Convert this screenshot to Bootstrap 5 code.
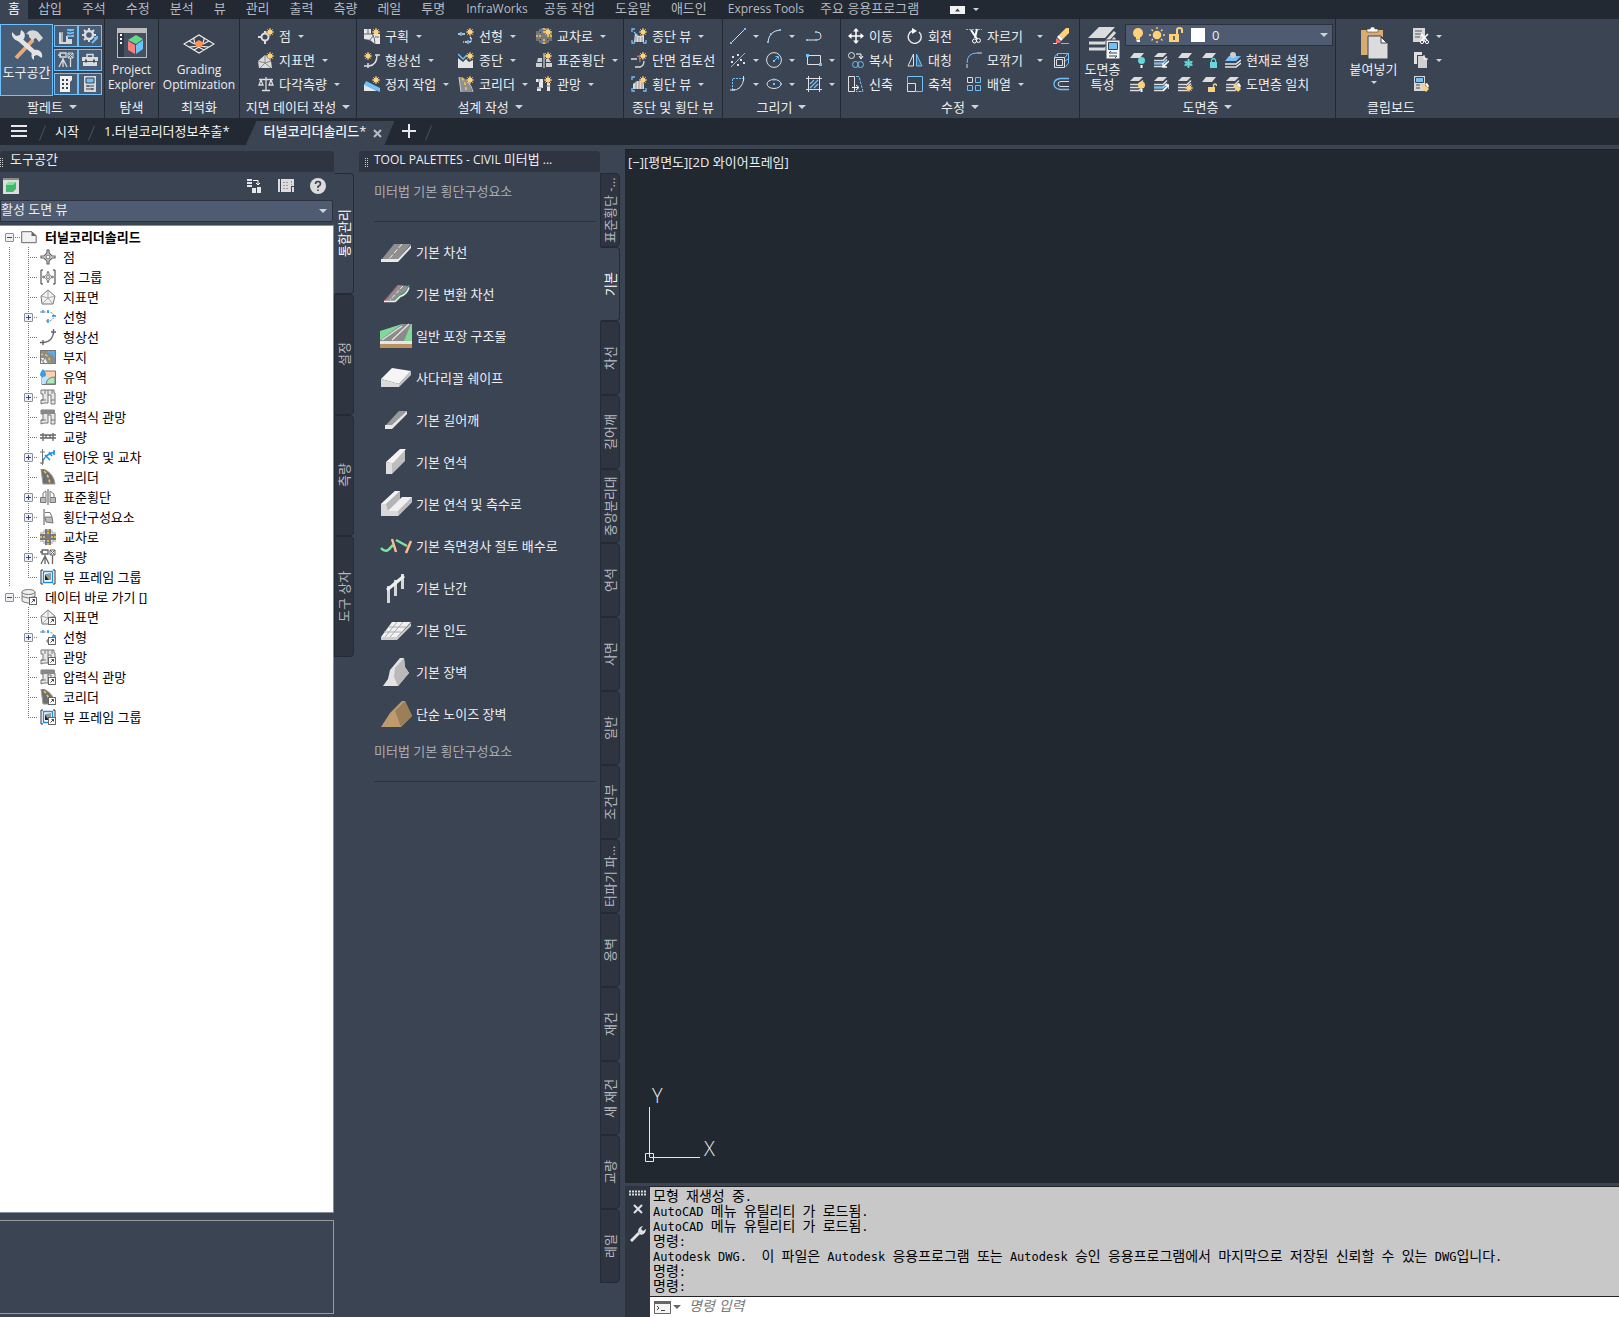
<!DOCTYPE html>
<html lang="ko">
<head>
<meta charset="utf-8">
<meta name="viewport" content="width=device-width, initial-scale=1">
<title>터널코리더솔리드</title>
<link href="https://cdn.jsdelivr.net/npm/bootstrap@5.3.0/dist/css/bootstrap.min.css" rel="stylesheet">
<style>
:root{--deep:#222933;--panel:#3b4453;--shade:#2e3440;--field:#4f5b70;--txt:#eceef0;--dim:#b7bbc1;--hl:#6fc0fb}
body{font-family:"Open Sans","Noto Sans CJK KR",sans-serif;font-size:13px;line-height:15px;color:var(--txt);background:var(--panel)}
button{color:inherit;background:none;border:0;padding:0}
svg{display:block;flex:none}
.en{font-size:12px}
.ko{font-size:13px}
.i16{width:16px;height:16px}
.app{min-height:100vh}
/* menu */
.menubar{background:var(--deep);height:19px;color:var(--dim)}
.menubar a{color:inherit;text-decoration:none;padding:0 10px;line-height:17px;height:19px;white-space:nowrap}
.menubar a.on{background:var(--panel);color:#fff;padding:0 8px}
.menubar a.en{padding:0 6px 0 11px}
.minimise{background:#f2f2f2;width:15px;height:8px;margin:6px 6px 0 21px}
/* ribbon */
.ribbon{height:99px}
.rpanel{border-right:1px solid var(--deep);padding-top:5px;flex:none}
.rpanel.last{border-right:0;width:110px}
.p-palettes{width:105px}.p-explore{width:54px}.p-grading{width:81px}.p-ground{width:117px}.p-design{width:267px}.p-views{width:99px}.p-draw{width:118px}.p-modify{width:239px}.p-layers{width:256px}
.rbody{height:72px}
.inset{padding-left:7px}
.inset-lg{padding-left:18px}
.c36{width:36px}.c40{width:40px}.c59{width:59px}.c78{width:78px}.c87{width:87px}.c94{width:94px}
.rtitle{height:22px;line-height:21px;white-space:nowrap;display:flex;justify-content:center;align-items:center;gap:6px}
.rb{display:flex;align-items:center;height:24px;gap:5px;white-space:nowrap;line-height:15px}
.dd{width:0;height:0;border:3px solid transparent;border-top-color:#d0d3d8;border-bottom:0;margin-left:2px;flex:none}
.dd.big{border-width:4px;border-bottom:0;margin:0}
.wide{width:43px;text-align:left}
.bigb{display:flex;flex-direction:column;align-items:center;white-space:nowrap;line-height:15px}
.bigb svg{margin:3px 0 3px 3px}
.bigb.tools{width:53px}
.bigb.tools svg{margin:4px 0}
.bigb.explore svg{margin:4px 0}
.bigb.grade svg{margin:10px 0 8px}
.bigb.layerprops{width:45px}
.bigb.pasting{width:49px;margin:0 15px 0 13px}
.toggle-on{background:#475c75;border:1px solid var(--hl)}
.pgrid{display:grid;grid-template-columns:24px 24px;grid-auto-rows:22px;row-gap:2px;padding:1px 2px 0 1px}
.pgrid button{display:flex;align-items:center;justify-content:center}
.layerbox{background:var(--field);border:1px solid #2b323e;height:22px;width:208px;display:flex;align-items:center;padding-left:4px;gap:3px;margin-bottom:2px}
.layerbox select{appearance:none;background:none;border:0;color:var(--txt);flex:1;padding:0;outline:0}
/* file tabs */
.filetabs{background:var(--deep);height:27px;padding-top:3px}
.filetabs a{color:#f3f4f5;text-decoration:none;white-space:nowrap;line-height:20px;height:24px;padding:0 12px}
.filetabs a.longer{padding-right:16px}
.filetabs a.on{display:flex;gap:7px;background:var(--panel);clip-path:polygon(11px 0,100% 0,calc(100% - 10px) 100%,0 100%);padding:0 12px 0 18px;font-weight:500}
.filetabs a.on svg{margin-top:8px}
.burger{width:42px;padding:0 0 4px 10px}
.addtab{padding:0 8px 4px}
.slash{width:1px;height:16px;background:#4b5361;transform:rotate(22deg);margin-top:4px}
/* docks */
.workspace{flex:1;padding-top:4px}
.dockhead{background:var(--shade);height:21px;line-height:17px;border-radius:4px 4px 0 0;white-space:nowrap}
.grip{width:4px;height:10px;margin:7px 6px 0 0;background:conic-gradient(transparent 75%,#c9ccd1 0) 0 0/2px 2px}
.toolspace{width:334px;margin-top:2px}
.tsbar{height:28px;padding:0 8px 0 3px}
.views{background:var(--field);border:1px solid #2b323e;border-radius:0 2px 2px 0;color:var(--txt);appearance:none;height:22px;padding:0 0 3px;width:333px;outline:0}
.views+.dd{margin-left:-14px}
.vtabs{width:20px;padding-top:24px}
.vtabs button{writing-mode:vertical-rl;text-orientation:sideways;transform:rotate(180deg);height:121px;width:20px;background:var(--shade);border:1px solid #252b36;border-radius:4px 0 0 4px;color:var(--dim);text-align:center;white-space:nowrap;overflow:hidden;line-height:16px;font-size:13px}
.vtabs.small button{height:74px}
.vtabs button.on{background:var(--panel);color:#fff;border-right-color:var(--panel)}
.treebox{background:#fff;color:#000;border:1px solid #868d98;border-left:0;flex:1;padding-top:1px;margin:3px 0 7px}
.treebox ul{list-style:none;margin:0;padding:0}
.trow{display:flex;align-items:center;height:20px;line-height:18px;white-space:nowrap}
.trow button{width:9px;height:9px;border:1px solid #8b8f95;border-radius:1px;flex:none;background:linear-gradient(#34468c,#34468c) 50% 50%/5px 1px no-repeat,#eef0f4}
.trow button.plus{background:linear-gradient(#34468c,#34468c) 50% 50%/5px 1px no-repeat,linear-gradient(#34468c,#34468c) 50% 50%/1px 5px no-repeat,#eef0f4}
.troot{padding-left:5px;background:repeating-linear-gradient(90deg,#777 0 1px,transparent 1px 2px) 15px 10px/5px 1px no-repeat}
.troot svg{margin:0 8px 0 7px}
.kids .trow{padding-left:24px;background:repeating-linear-gradient(#777 0 1px,transparent 1px 2px) 28px 0/1px 100% no-repeat,repeating-linear-gradient(90deg,#777 0 1px,transparent 1px 2px) 28px 10px/10px 1px no-repeat}
.kids li:last-child .trow{background-size:1px 11px,10px 1px}
.kids svg{margin:0 7px 0 16px}
.kids button+svg{margin-left:7px}
.kids.linked{background:repeating-linear-gradient(#777 0 1px,transparent 1px 2px) 9px 0/1px 100% no-repeat}
.infobox{border:1px solid #9a9a9a;border-left:0;height:94px;margin-bottom:3px}
.palette{width:241px;margin:2px 0 0 5px}
.palette .grip{margin-left:6px;margin-right:5px}
.groupname{color:#a9adb4;margin:0 4px 9px 15px;padding:12px 0 22px;border-bottom:1px solid #2b323e}
.groupname.end{padding-top:9px}
.pitem{display:flex;align-items:center;gap:4px;height:42px;padding-left:21px;width:100%;white-space:nowrap}
.pitem svg{width:32px;height:30px}
.stage{margin-left:5px}
.drawing{background:#212830;border-top:1px solid #1c222a;flex:1;padding:5px 3px 20px}
.drawing text{font-family:"Open Sans",sans-serif;font-weight:300;font-size:20px;fill:#e6e6e6}
.cmdbar{background:var(--shade);margin-top:3px;height:131px}
.cmdtools{width:25px}
.cmdlog{background:#c8c8c8;color:#000;border-top:1px solid #222;height:110px;padding:2px 3px 0;font-family:"Liberation Mono","Noto Sans CJK KR",monospace;font-family:"DejaVu Sans Mono","Noto Sans CJK KR",monospace;font-size:12px;line-height:15px;white-space:pre;overflow:hidden}
.cmdlog div{height:15px}
.cmdlog b{font-weight:400;font-size:14px;line-height:14px}
.cmdin{background:#fff;border-top:1px solid #222;flex:1;color:#777}
.cmdin .dd{border-top-color:#666;margin-left:2px}
.cmdin input{border:0;outline:0;flex:1;font:italic 14px/16px "Noto Sans CJK KR",sans-serif;height:19px;padding:0 0 4px;color:#777}
.cmdin input::placeholder{color:#777;opacity:1}
</style>
<script src="https://cdn.jsdelivr.net/npm/bootstrap@5.3.0/dist/js/bootstrap.bundle.min.js"></script>
</head>
<body>
<svg width="0" height="0" class="position-absolute" aria-hidden="true"><defs>
<g id="sun"><circle cx="12" cy="4" r="2.5" fill="#ffd27a"/><path d="M12 0v8M8 4h8M9.3 1.3l5.4 5.4M14.7 1.3L9.3 6.7" stroke="#ffd27a"/></g>
<g id="lnk"><rect x="8.500" y="8.500" width="7" height="7" fill="#fff" stroke="#666"/><path d="M10.500 13.500l3-3M11.500 10.500h2v2" stroke="#444" fill="none"/></g>
<g id="sheet"><path d="M5 1h10l-4 5H1z" fill="#dcdcdc"/></g>
<g id="stack"><path d="M5 1h9l-4 4H1z" fill="#dcdcdc"/><path d="M1 8.500h9l4-4M1 11.500h9l4-4M1 14.500h9l4-4" stroke="#dcdcdc" stroke-width="1.500" fill="none"/></g>
<symbol id="tools" viewBox="0 0 32 32"><path d="M22 11L5 29" stroke="#f0a873" stroke-width="4"/><path d="M15 5l3-3q5-2 9 1l5 6-4 4-3-4q-2 0-3 3l-4-4q1-3-3-3z" fill="#d8d8d8"/><path d="M7 9l18 16" stroke="#e3e3e3" stroke-width="4.500"/><path d="M1 3l4 4 4-1 1-5c5 2 5 8 1 11-6 1-11-3-10-9zM31 29l-5-3-3 1v4c-4-2-3-9 1-10 5-1 8 3 7 8z" fill="#e3e3e3"/></symbol>
<symbol id="p1" viewBox="0 0 16 16"><path d="M1 4h4v10h3V8h2v3h4v5H1z" fill="#d8d8d8"/><path d="M1 4h3v10" fill="none" stroke="#38506c" stroke-width=".6"/><path d="M9 1h7v8H9z" fill="#6fc0fb"/><path d="M9 3q3 2 7 0M9 6q3 2 7 0" stroke="#38506c" fill="none"/></symbol>
<symbol id="p2" viewBox="0 0 16 16"><circle cx="7" cy="7" r="4" fill="none" stroke="#dcdcdc" stroke-width="2.500"/><path d="M7 0v3M7 11v3M0 7h3M11 7h3M2 2l2 2M12 2l-2 2M2 12l2-2" stroke="#dcdcdc" stroke-width="2"/><path d="M10 15l5-5M15 8v3M13 9v2" stroke="#6fc0fb" stroke-width="1.800"/></symbol>
<symbol id="survey" viewBox="0 0 16 16"><path d="M5 6v9M5 7L1 15M5 7l4 8M12.500 6v9" stroke="currentColor" stroke-width="1.300"/><path d="M2 1h6v4H2z M0 3h3" fill="none" stroke="currentColor" stroke-width="1.300"/><path d="M10 1h5v5h-5zM10 1l5 5M15 1l-5 5" stroke="currentColor" fill="none"/></symbol>
<symbol id="p4" viewBox="0 0 16 16"><path d="M0 5h16v4H0zM1 10h14v4H1z" fill="#dcdcdc"/><path d="M5 5V2.500h6V5" stroke="#dcdcdc" fill="none" stroke-width="1.500"/><path d="M4 7.500v3M12 7.500v3" stroke="#38506c" stroke-width="2"/></symbol>
<symbol id="p5" viewBox="0 0 16 16"><path d="M2 0h12v4l-2 2v10H2z" fill="#f0f0f0"/><path d="M4 4h2M8 4h2M4 8h2M8 8h2M4 12h2M8 12h2" stroke="#3b4453" stroke-width="2"/></symbol>
<symbol id="p6" viewBox="0 0 16 16"><path d="M2 0h12v16H2z" fill="#d8d8d8"/><path d="M4 2h8v5H4z" fill="#6fc0fb" stroke="#3b4453"/><path d="M4 10h8M4 13h8M6 9v2M10 12v2" stroke="#3b4453"/></symbol>
<symbol id="explorer" viewBox="0 0 30 30"><path d="M0 0h30v30H0z" fill="#bdbdbd"/><path d="M1 5h6v24H1z" fill="#303745"/><path d="M7 5h22v24H7z" fill="#465060"/><path d="M3 6h2v2H3zM3 10h2v2H3zM3 14h2v2H3z" fill="#fff"/><path d="M11 12l8-5 7 4-7 5z" fill="#66d78a"/><path d="M11 13l7 4v9l-7-4z" fill="#ff7d7d"/><path d="M19 17l7-5v9l-7 5z" fill="#6cc4f6"/></symbol>
<symbol id="grading" viewBox="0 0 32 20"><path d="M1 10L16 1l15 9-15 9zM6 7q10 6 20 6M6 13q10 0 20-6M11 4q-1 7 10 12M21 4q1 6-10 12" fill="none" stroke="#ededed" stroke-width="1.200"/><path d="M11 9l5-3 5 3-3 4h-4z" fill="#ff9354"/></symbol>
<symbol id="point" viewBox="0 0 16 16"><circle cx="7" cy="9" r="3.500" fill="none" stroke="#dcdcdc" stroke-width="2"/><path d="M7 3v3M7 12v4M0 9h3" stroke="#dcdcdc" stroke-width="2"/><use href="#sun"/></symbol>
<symbol id="surface" viewBox="0 0 16 16"><path d="M0 9l7-6 6 6 1 7H1z" fill="#dcdcdc"/><path d="M7 3v8l6-2M7 11l-7-2M7 11l-5 5M7 11l6 5" stroke="#888" fill="none"/><use href="#sun"/></symbol>
<symbol id="scale" viewBox="0 0 16 16"><path d="M8 1v13M4 14.500h8M1 3.500h14M3 4l-2 5h4zM13 4l-2 5h4z" fill="none" stroke="#dcdcdc" stroke-width="1.300"/></symbol>
<symbol id="parcel" viewBox="0 0 16 16"><path d="M0 1h7v5h9v10h-5l-5-4-6-1z" fill="#e8e8e8"/><path d="M0 6h8q3 3 3 10M4 1v5M10 7l-5 6M15 9h-4" stroke="#667" fill="none"/><use href="#sun"/></symbol>
<symbol id="fline" viewBox="0 0 16 16"><path d="M0 14h5Q13 13 13 3M4 11v5M11 3h5" fill="none" stroke="#dcdcdc" stroke-width="1.500"/><g transform="translate(-8)"><use href="#sun"/></g></symbol>
<symbol id="gradew" viewBox="0 0 16 16"><path d="M0 8v7h13z" fill="#e8e8e8"/><path d="M2 5l14 7v4L0 9z" fill="#6fc0fb"/><use href="#sun"/></symbol>
<symbol id="align" viewBox="0 0 16 16"><path d="M0 6h7M12 9q3 3 0 5H5" fill="none" stroke="#d8e8f4" stroke-width="1.300" stroke-dasharray="3 1"/><path d="M3 4v4M10 12v4" stroke="#6fc0fb" stroke-width="1.500"/><use href="#sun"/></symbol>
<symbol id="profile" viewBox="0 0 16 16"><path d="M0 6l5 4 3-3 3 3 4-2v8H0z" fill="#e4e4e4"/><path d="M0 2l5 5 4-4" stroke="#6fc0fb" fill="none" stroke-width="1.500"/><use href="#sun"/></symbol>
<symbol id="corr" viewBox="0 0 16 16"><path d="M1 1l3 0Q13 5 14 16H3z" fill="#8d8f92"/><path d="M1 1l2 15M10 6q4 4 5 10" stroke="#ccc" fill="none"/><path d="M4 2q4 5 4 14" stroke="#ffc83c" fill="none" stroke-width="1.500" stroke-dasharray="3 2"/><use href="#sun"/></symbol>
<g id="xroad"><path d="M5 0h6v5h5v6h-5v5H5v-5H0V5h5z" fill="#77797c"/><path d="M8 0v5M8 11v5M0 8h5M11 8h5" stroke="#ffc83c" stroke-width="1.500" stroke-dasharray="2 1"/><path d="M4 1v3H0M12 1v3h4M4 15v-3H0M12 15v-3h4" stroke="#9c9ea1" fill="none"/></g>
<symbol id="cross" viewBox="0 0 16 16"><use href="#xroad"/><use href="#sun"/></symbol>
<symbol id="cross2" viewBox="0 0 16 16"><use href="#xroad"/></symbol>
<symbol id="assembly" viewBox="0 0 16 16"><path d="M0 11h6v4H0zM10 11h6v4h-6zM2 6h4v4H1zM10 7h3l2 3h-5z" fill="#cfcfcf"/><path d="M8 1v15" stroke="#eee"/><use href="#sun"/></symbol>
<symbol id="pipe" viewBox="0 0 16 16"><path d="M0 3h7v9H5v3H1v-4h2V6H0zM11 7h3v8h-3z" fill="#e8e8e8"/><path d="M3 3v3M1 12h5M10 10h5" stroke="#777"/><use href="#sun"/></symbol>
<symbol id="pview" viewBox="0 0 16 16"><path d="M4 5l4 3 5-1v7H3z" fill="#dcdcdc"/><path d="M4 1H1v3M1 12v3h3M12 15h3v-3M3 4l4 4" stroke="#6fc0fb" fill="none" stroke-width="1.300"/><path d="M5 8v6M8 9v5M11 9v5" stroke="#777" stroke-width=".7"/><use href="#sun"/></symbol>
<symbol id="sline" viewBox="0 0 16 16"><path d="M0 7h6M4 15h5q4-1 4-6" stroke="#dcdcdc" fill="none" stroke-width="1.300"/><path d="M6 4q3 0 3 6" stroke="#f08080" fill="none"/><use href="#sun"/></symbol>
<symbol id="xview" viewBox="0 0 16 16"><path d="M2 13V8l4-3h5l2 3v5z" fill="#dcdcdc"/><path d="M4 1H1v3M1 12v3h3M12 15h3v-3" stroke="#6fc0fb" fill="none" stroke-width="1.300"/><path d="M5 6v7M8 5v8M11 6v7" stroke="#777" stroke-width=".7"/><use href="#sun"/></symbol>
<symbol id="line" viewBox="0 0 16 16"><path d="M1 15L15 1" stroke="#e0e0e0"/><path d="M0 14h2v2H0zM14 0h2v2h-2z" fill="#6fc0fb"/></symbol>
<symbol id="arc" viewBox="0 0 16 16"><path d="M2 14Q3 3 14 2" stroke="#e0e0e0" fill="none"/><path d="M1 13h2v2H1zM4 5h2v2H4zM13 1h2v2h-2z" fill="#6fc0fb"/></symbol>
<symbol id="poly" viewBox="0 0 16 16"><path d="M1 12h9M11 4q4 0 4 4t-5 4" stroke="#e0e0e0" fill="none"/><path d="M0 11h2v2H0zM9 11h2v2H9zM9 3h2v2H9z" fill="#6fc0fb"/></symbol>
<symbol id="ray" viewBox="0 0 16 16"><path d="M1 15L15 1" stroke="#6fc0fb"/><path d="M2 4h2v2H2zM7 2h2v2H7zM1 9h2v2H1zM10 7h2v2h-2zM7 12h2v2H7zM13 10h2v2h-2z" fill="#e0e0e0"/></symbol>
<symbol id="circ" viewBox="0 0 16 16"><circle cx="8" cy="8" r="7.400" stroke="#e0e0e0" fill="none"/><path d="M8 9l4-4M9.500 4.500h3v3" stroke="#6fc0fb" fill="none"/><path d="M7 8h2v2H7z" fill="#6fc0fb"/></symbol>
<symbol id="rect" viewBox="0 0 16 16"><path d="M1.500 3.500h13v9h-13z" stroke="#e0e0e0" fill="none"/><path d="M0 2h3v3H0zM13 11h3v3h-3z" fill="#6fc0fb"/></symbol>
<symbol id="pie" viewBox="0 0 16 16"><path d="M2 14q10 1 12-12" stroke="#e0e0e0" fill="none"/><path d="M2.500 14V2.500H14" stroke="#6fc0fb" fill="none" stroke-dasharray="2 1"/><path d="M0 14h5M13.500 0v5" stroke="#e0e0e0"/></symbol>
<symbol id="ell" viewBox="0 0 16 16"><ellipse cx="8" cy="8" rx="7" ry="4.500" stroke="#e0e0e0" fill="none"/><path d="M7 7h2v2H7zM7 2.500h2v2H7zM14 7h2v2h-2z" fill="#6fc0fb"/></symbol>
<symbol id="hatch" viewBox="0 0 16 16"><path d="M2.500 0v16M13.500 0v16M0 2.500h16M0 13.500h16" stroke="#e0e0e0"/><path d="M4 8l4-4M4 12l8-8M8 12l4-4" stroke="#6fc0fb" stroke-width="1.300"/></symbol>
<symbol id="move" viewBox="0 0 16 16"><path d="M8 1v14M1 8h14" stroke="#fff" stroke-width="1.500"/><path d="M8 0l3 3.500H5zM8 16l3-3.500H5zM0 8l3.500-3v6zM16 8l-3.500-3v6z" fill="#fff"/></symbol>
<symbol id="rot" viewBox="0 0 16 16"><path d="M12 4A6.500 6.500 0 1 1 5 3" stroke="#e8e8e8" fill="none" stroke-width="1.400"/><path d="M5 0v6l5-3z" fill="#fff"/></symbol>
<symbol id="trim" viewBox="0 0 16 16"><path d="M0 1.500h16" stroke="#6fc0fb" stroke-dasharray="2 1"/><path d="M5 2l6 9M11 1L9 10" stroke="#fff" stroke-width="2"/><circle cx="8.500" cy="13" r="2" stroke="#fff" fill="none"/><circle cx="12.500" cy="12.500" r="2" stroke="#fff" fill="none"/></symbol>
<symbol id="copy" viewBox="0 0 16 16"><circle cx="3.500" cy="3.500" r="3" stroke="#e0e0e0" fill="none"/><circle cx="7.500" cy="12.500" r="3" stroke="#6fc0fb" fill="none"/><circle cx="12.500" cy="12.500" r="3" stroke="#6fc0fb" fill="none"/><path d="M8 2h5v4M11 4l2 3 2-3" stroke="#fff" fill="none"/></symbol>
<symbol id="mirror" viewBox="0 0 16 16"><path d="M6.500 2v12H1z" stroke="#e0e0e0" fill="none"/><path d="M9.500 2v12H15z" stroke="#6fc0fb" fill="#6fc0fb" fill-opacity=".3"/></symbol>
<symbol id="fillet" viewBox="0 0 16 16"><path d="M1 11Q1 1 11 1" stroke="#6fc0fb" fill="none"/><path d="M1 12v4M11 1h5" stroke="#e0e0e0"/></symbol>
<symbol id="stretch" viewBox="0 0 16 16"><path d="M.5.5h6v15h-6z" stroke="#e0e0e0" fill="none"/><path d="M8 .5h3l4 15H8" stroke="#6fc0fb" fill="none" stroke-dasharray="3 1"/><path d="M4 11.500h6M8 9l3 2.500L8 14" stroke="#fff" fill="none"/></symbol>
<symbol id="scl" viewBox="0 0 16 16"><path d="M.5 7V.5h15v15H9" stroke="#6fc0fb" fill="none"/><path d="M.5 7.500h8v8h-8z" stroke="#e0e0e0" fill="none"/></symbol>
<symbol id="arr" viewBox="0 0 16 16"><path d="M1.500 1.500h5v5h-5z" stroke="#e0e0e0" fill="none"/><path d="M9.500 1.500h5v5h-5zM1.500 9.500h5v5h-5zM9.500 9.500h5v5h-5z" stroke="#6fc0fb" fill="none"/></symbol>
<symbol id="erase" viewBox="0 0 16 16"><path d="M13 0h3v5l-6 6-4-4z" fill="#ffd27a"/><path d="M6 7l4 4-2 2-4-4z" fill="#fff"/><path d="M4 10l4 4-2 1H3v-4z" fill="#f26d6d"/><path d="M0 15.500h4" stroke="#e0e0e0"/><path d="M8 15.500h8" stroke="#6fc0fb"/></symbol>
<symbol id="box" viewBox="0 0 16 16"><path d="M1.500 5.500h10v10h-10zM3.500 7.500h6v6h-6z" stroke="#e0e0e0" fill="none"/><path d="M1.500 5l3-3.500h11V11l-3 4M12 5.500l3-4M4.500 4V2M12 9l3-2" stroke="#6fc0fb" fill="none"/></symbol>
<symbol id="offset" viewBox="0 0 16 16"><path d="M16 2.500H7q-6 1-6 5.500t6 5.500h9" stroke="#6fc0fb" fill="none" stroke-width="1.300"/><path d="M16 5.500H8q-3 0-3 2.500t3 2.500h8" stroke="#e0e0e0" fill="none"/></symbol>
<symbol id="layers" viewBox="0 0 32 32"><path d="M11 0h16L17 11H0z" fill="#dcdcdc"/><path d="M1 16h16L27 5M1 22h16l10-11" stroke="#dcdcdc" stroke-width="3" fill="none"/><path d="M18 13h14v19H18z" fill="#f5f5f5" stroke="#3b4453"/><path d="M20.500 15.500h9v7h-9z" fill="#6fc0fb" stroke="#3b4453"/><path d="M21 26h8M21 29h8M23 24l-2 2M27 31l2-2" stroke="#3b4453"/></symbol>
<symbol id="bulb" viewBox="0 0 16 16"><circle cx="8" cy="6" r="5" fill="#ffd27a"/><path d="M6 10h4v2H6z" fill="#ffd27a"/><path d="M6 12.500h4V15H7z" fill="#fff"/></symbol>
<symbol id="bsun" viewBox="0 0 16 16"><circle cx="8" cy="8" r="4.300" fill="#ffd27a"/><path d="M8 0v2M8 14v2M0 8h2M14 8h2M2.500 2.500l1.500 1.500M12 12l1.500 1.500M13.500 2.500L12 4M4 12l-1.500 1.500" stroke="#ffd27a" stroke-width="1.300"/></symbol>
<symbol id="lock" viewBox="0 0 16 16"><path d="M1 7h10v8H1z" fill="#ffd27a"/><path d="M9 7V3q0-2 2.500-2T14 3v3" stroke="#ffd27a" fill="none" stroke-width="2"/><path d="M6 9v4" stroke="#3b4453" stroke-width="1.500"/></symbol>
<symbol id="l1" viewBox="0 0 16 16"><use href="#sheet"/><circle cx="12.500" cy="8.500" r="3.500" fill="#63d8dd"/><path d="M11.500 13h2v3h-2z" fill="#fff"/></symbol>
<symbol id="l2" viewBox="0 0 16 16"><use href="#stack"/><path d="M1 11.500h9l3-3" stroke="#6fc0fb" stroke-width="2" fill="none"/><path d="M16 9l-6 6M10 11v4h4" stroke="#fff" fill="none" stroke-width="1.300"/></symbol>
<symbol id="l3" viewBox="0 0 16 16"><use href="#sheet"/><path d="M11.500 7v9M7.500 9.500l8 4M15.500 9.500l-8 4" stroke="#63d8dd" stroke-width="1.500"/><circle cx="11.500" cy="11.500" r="2.800" stroke="#63d8dd" fill="none"/></symbol>
<symbol id="l4" viewBox="0 0 16 16"><use href="#sheet"/><path d="M9 10h7v6H9z" fill="#63d8dd"/><path d="M10.500 10V8q2-3 4 0v2" stroke="#63d8dd" fill="none" stroke-width="1.300"/></symbol>
<symbol id="l5" viewBox="0 0 16 16"><path d="M4 4h12l-5 5H0z" fill="#6fc0fb"/><circle cx="8" cy="3" r="3" fill="#ccc"/><path d="M0 12h11l5-4M0 15h11l5-4" stroke="#e4e4e4" stroke-width="1.500" fill="none"/></symbol>
<symbol id="m1" viewBox="0 0 16 16"><use href="#stack"/><circle cx="12.500" cy="9" r="3.500" fill="#ffd27a"/><path d="M11.500 13h2v3h-2z" fill="#fff"/></symbol>
<symbol id="m2" viewBox="0 0 16 16"><use href="#stack"/><path d="M1 11.500h9l3-3" stroke="#6fc0fb" stroke-width="2" fill="none"/><path d="M10 15l6-6M12 9h4v4" stroke="#fff" fill="none" stroke-width="1.300"/></symbol>
<symbol id="m3" viewBox="0 0 16 16"><use href="#stack"/><g transform="translate(0 8)"><use href="#sun"/></g></symbol>
<symbol id="m4" viewBox="0 0 16 16"><use href="#sheet"/><path d="M7 11h7v5H7z" fill="#ffd27a"/><path d="M12.500 11V9q1.500-2 3 0v1" stroke="#ffd27a" fill="none" stroke-width="1.300"/></symbol>
<g id="brush"><path d="M8 10l3-2 5 5-3 3z" fill="#ffd27a"/><path d="M12 8l2-1 2 3-1 2z" fill="#fff"/></g>
<symbol id="m5" viewBox="0 0 16 16"><use href="#stack"/><use href="#brush"/></symbol>
<symbol id="paste" viewBox="0 0 28 32"><path d="M0 3h22v25H0z" fill="#d9ab70"/><path d="M6 2h3l1-2h3l1 2h3v3H6z" fill="#fff" stroke="#3b4453" stroke-width=".6"/><path d="M7 9h13l7 7v16H7z" fill="#dcdcdc" stroke="#3b4453"/><path d="M20 10v6h6z" fill="#fff" stroke="#3b4453"/></symbol>
<symbol id="cut" viewBox="0 0 16 16"><path d="M0 0h12v14H0z" fill="#d8d8d8"/><path d="M2 3h7M2 6h6M2 9h5" stroke="#556"/><path d="M8 6l6 6M15 6l-7 7" stroke="#fff" stroke-width="1.500"/><circle cx="9" cy="14" r="1.600" fill="#3b4453" stroke="#fff"/><circle cx="14" cy="14" r="1.600" fill="#3b4453" stroke="#fff"/></symbol>
<symbol id="cpy" viewBox="0 0 16 16"><path d="M1 0h8v3H4v9H1z" fill="#e0e0e0"/><path d="M5 4h6l3 3v9H5z" fill="#d0d0d0"/><path d="M11 3v4h4" fill="none" stroke="#fff"/></symbol>
<symbol id="match" viewBox="0 0 16 16"><path d="M1 0h11v15H1z" fill="#d8d8d8"/><path d="M2.500 1.500h8v5h-8z" fill="#6fc0fb" stroke="#3b4453"/><path d="M3 9h4M3 12h4" stroke="#3b4453"/><use href="#brush"/></symbol>
<symbol id="cube" viewBox="0 0 16 16"><path d="M0 0h16v16H0z" fill="#dcdcdc"/><path d="M0 0h16v2H0z" fill="#8a8a8a"/><path d="M3 7l3-3h7v7l-3 3H3z" fill="#43b86b"/><path d="M3 7l3-3h7l-3 3z" fill="#85e2a4"/></symbol>
<symbol id="tg" viewBox="0 0 16 16"><path d="M1 1h5v2H1zM1 4h5v2H1zM1 7h5v2H1zM6 10h4v5H6zM11 9h4v6h-4z" fill="#e6e6e6"/><path d="M7 2.500h5V6M10 5l2 2 2-2" stroke="#fff" fill="none"/></symbol>
<symbol id="pano" viewBox="0 0 16 16"><path d="M0 1h2v13H0zM3 1h13v7h-3v6H3zM14 9h2v5h-2z" fill="#dcdcdc"/><path d="M5 4.500h6M5 7.500h6M5 10.500h6M13.500 3v4" stroke="#99a" stroke-dasharray="2 1"/></symbol>
<symbol id="doc" viewBox="0 0 16 16"><path d="M.7 2.700h10l4.500 4v7H.7z" fill="#f2f2f2" stroke="#666"/><path d="M10.500 2.500v4.500h5z" fill="#666"/></symbol>
<symbol id="db" viewBox="0 0 16 16"><path d="M1 3v9q6 4 13 0V3" fill="#eee" stroke="#777"/><ellipse cx="7.500" cy="3" rx="6.500" ry="2.500" fill="#eee" stroke="#777"/><path d="M1 7.500q6 3 13 0" stroke="#777" fill="none"/><use href="#lnk"/></symbol>
<g id="ptg"><path d="M7 1h2v3l3 3h3v2h-3l-3 3v3H7v-3L4 9H1V7h3l3-3z" fill="#e6e6e6" stroke="#666" stroke-width="1.200"/><circle cx="8" cy="8" r="2" fill="#fff" stroke="#666"/></g>
<symbol id="tpt" viewBox="0 0 16 16"><use href="#ptg"/></symbol>
<symbol id="tpg" viewBox="0 0 16 16"><g transform="translate(2 2) scale(.75)"><use href="#ptg"/></g><path d="M3 1H1v14h2M13 1h2v14h-2" stroke="#333" fill="none"/></symbol>
<g id="tsurfg"><path d="M8 1l7 6-2 8H2L1 7z" fill="#f0f0f0" stroke="#777"/><path d="M8 1v8l7-2M8 9L1 7M8 9l-6 6M8 9l5 6" stroke="#999" fill="none" stroke-width=".8"/></g>
<symbol id="tsurf" viewBox="0 0 16 16"><use href="#tsurfg"/></symbol>
<symbol id="tsurfl" viewBox="0 0 16 16"><use href="#tsurfg"/><use href="#lnk"/></symbol>
<g id="talg"><path d="M0 3h9q5 1 5 4t-4 5H5" stroke="#777" fill="none" stroke-dasharray="2 1.500"/><path d="M3 1v3M8 1v3M12 7h4M8 10v4" stroke="#1b8fe0" stroke-width="1.400"/></g>
<symbol id="tal" viewBox="0 0 16 16"><use href="#talg"/></symbol>
<symbol id="tall" viewBox="0 0 16 16"><use href="#talg"/><use href="#lnk"/></symbol>
<symbol id="tfl" viewBox="0 0 16 16"><path d="M0 13.500h4Q13 12 13.500 3M3 11v5M11 3h5M13.500 0v5" fill="none" stroke="#666" stroke-width="1.400"/></symbol>
<symbol id="tsite" viewBox="0 0 16 16"><path d="M0 1h16v14H0z" fill="#8c8c8c"/><path d="M8 1h8v10Q14 5 8 4z" fill="#57aeea"/><path d="M0 9h5l3 6H0z" fill="#eee"/><path d="M0 9l5 6M5 9L3 12" stroke="#777" fill="none"/><path d="M0 5.500h5q5 2 5 10" stroke="#ffc83c" fill="none" stroke-width="1.300" stroke-dasharray="3 2"/><path d="M.5 1.500h15v13H.5z" stroke="#777" fill="none"/></symbol>
<symbol id="tcat" viewBox="0 0 16 16"><path d="M2 2h13.500v13.500H2z" fill="#ffd0b0" stroke="#777"/><path d="M2 9l4-2 3 2-3 6H2z" fill="#bfe4ff"/><path d="M6 15q1-7 9-7v7z" fill="#a8eab8" stroke="#777"/><path d="M3 0q6 7 0 8-6-1 0-8z" fill="#3f9be0"/></symbol>
<g id="tpig"><path d="M1 1h13v3h1v11h-4V6H8v8H4l-3 1v-4h2V5H1z" fill="#e8e8e8" stroke="#777"/><path d="M5 1v4M8 1v5M12 1v4M1 11h5M11 11h4" stroke="#777"/></g>
<symbol id="tpi" viewBox="0 0 16 16"><use href="#tpig"/></symbol>
<symbol id="tpil" viewBox="0 0 16 16"><use href="#tpig"/><use href="#lnk"/></symbol>
<symbol id="tpp" viewBox="0 0 16 16"><use href="#tpig"/><path d="M1 1h14v4H1z" fill="#888"/></symbol>
<symbol id="tppl" viewBox="0 0 16 16"><use href="#tpig"/><path d="M1 1h14v4H1z" fill="#888"/><use href="#lnk"/></symbol>
<symbol id="tbr" viewBox="0 0 16 16"><path d="M0 6h16M0 9h16M3 4v8M6 6v3M10 6v3M13 4v8" stroke="#666" stroke-width="1.300" fill="none"/></symbol>
<symbol id="tto" viewBox="0 0 16 16"><path d="M2 15Q4 5 15 3M5 6l5 5M9 3l3 4M14 1v5" stroke="#1b8fe0" fill="none" stroke-width="1.500"/><path d="M2.500 0v16M0 3h5M0 14h4" stroke="#777"/></symbol>
<g id="tcog"><path d="M1 0l3 0Q14 5 15 15H3z" fill="#6f6f6f" stroke="#999"/><path d="M4 2q5 5 6 13" stroke="#ffc83c" fill="none" stroke-width="1.600" stroke-dasharray="3 2"/></g>
<symbol id="tco" viewBox="0 0 16 16"><use href="#tcog"/></symbol>
<symbol id="tcol" viewBox="0 0 16 16"><use href="#tcog"/><use href="#lnk"/></symbol>
<symbol id="tas" viewBox="0 0 16 16"><path d="M.5 8.500H6v5H.5zM10 8.500h5.500v5H10z" fill="#bbb" stroke="#777"/><path d="M3 8V4l3-2v6M10 8V2l4 3v3" fill="none" stroke="#777"/><path d="M8 0v16" stroke="#555"/></symbol>
<symbol id="tsa" viewBox="0 0 16 16"><path d="M5 8h7l1 6-7-1z" fill="#bbb" stroke="#777"/><path d="M5 3.500h5l2 4.500" fill="none" stroke="#777"/><path d="M4 0v16" stroke="#555"/></symbol>
<g id="tvfg"><path d="M3 1H1v14h2M13 1h2v14h-2" stroke="#333" fill="none"/><path d="M3.500 2.500h9v11h-9z" stroke="#1b8fe0" fill="#fff" stroke-width="1.400"/><path d="M5 5l6-1v7H5z" fill="#999"/><path d="M5 6l4 5H5z" fill="#222"/></g>
<symbol id="tvf" viewBox="0 0 16 16"><use href="#tvfg"/></symbol>
<symbol id="tvfl" viewBox="0 0 16 16"><use href="#tvfg"/><use href="#lnk"/></symbol>
</defs></svg>

<div class="app d-flex flex-column">
<nav class="menubar d-flex" aria-label="리본 탭">
<a href="#" class="on">홈</a><a href="#">삽입</a><a href="#">주석</a><a href="#">수정</a><a href="#">분석</a><a href="#">뷰</a><a href="#">관리</a><a href="#">출력</a><a href="#">측량</a><a href="#">레일</a><a href="#">투명</a><a href="#" class="en">InfraWorks</a><a href="#">공동 작업</a><a href="#">도움말</a><a href="#">애드인</a><a href="#" class="en">Express Tools</a><a href="#">주요 응용프로그램</a>
<button class="minimise" aria-label="최소화"><svg width="15" height="8"><path d="M5 5.500L7.500 2.500 10 5.500z" fill="#444"/></svg></button><span class="dd mt-2"></span>
</nav>

<header class="ribbon d-flex">
<section class="rpanel p-palettes"><div class="rbody d-flex">
<button class="bigb tools toggle-on"><svg width="32" height="32"><use href="#tools"/></svg><span>도구공간</span></button>
<div class="pgrid"><button class="toggle-on" aria-label="파노라마"><svg class="i16"><use href="#p1"/></svg></button><button class="toggle-on" aria-label="설정"><svg class="i16"><use href="#p2"/></svg></button><button class="toggle-on" aria-label="측량"><svg class="i16" color="#dcdcdc"><use href="#survey"/></svg></button><button class="toggle-on" aria-label="도구 상자"><svg class="i16"><use href="#p4"/></svg></button><button class="toggle-on" aria-label="도구 팔레트"><svg class="i16"><use href="#p5"/></svg></button><button class="toggle-on" aria-label="특성"><svg class="i16"><use href="#p6"/></svg></button></div>
</div><div class="rtitle">팔레트<i class="dd big"></i></div></section>

<section class="rpanel p-explore"><div class="rbody d-flex justify-content-center"><button class="bigb explore en"><svg width="30" height="30"><use href="#explorer"/></svg><span>Project<br>Explorer</span></button></div><div class="rtitle">탐색</div></section>

<section class="rpanel p-grading"><div class="rbody d-flex justify-content-center"><button class="bigb grade en"><svg width="32" height="20"><use href="#grading"/></svg><span>Grading<br>Optimization</span></button></div><div class="rtitle">최적화</div></section>

<section class="rpanel p-ground"><div class="rbody inset-lg">
<button class="rb"><svg class="i16"><use href="#point"/></svg>점<i class="dd"></i></button>
<button class="rb"><svg class="i16"><use href="#surface"/></svg>지표면<i class="dd"></i></button>
<button class="rb"><svg class="i16"><use href="#scale"/></svg>다각측량<i class="dd"></i></button>
</div><div class="rtitle">지면 데이터 작성<i class="dd big"></i></div></section>

<section class="rpanel p-design"><div class="rbody d-flex inset">
<div class="c94"><button class="rb"><svg class="i16"><use href="#parcel"/></svg>구획<i class="dd"></i></button>
<button class="rb"><svg class="i16"><use href="#fline"/></svg>형상선<i class="dd"></i></button>
<button class="rb"><svg class="i16"><use href="#gradew"/></svg>정지 작업<i class="dd"></i></button></div>
<div class="c78"><button class="rb"><svg class="i16"><use href="#align"/></svg>선형<i class="dd"></i></button>
<button class="rb"><svg class="i16"><use href="#profile"/></svg>종단<i class="dd"></i></button>
<button class="rb"><svg class="i16"><use href="#corr"/></svg>코리더<i class="dd"></i></button></div>
<div><button class="rb"><svg class="i16"><use href="#cross"/></svg>교차로<i class="dd"></i></button>
<button class="rb"><svg class="i16"><use href="#assembly"/></svg>표준횡단<i class="dd"></i></button>
<button class="rb"><svg class="i16"><use href="#pipe"/></svg>관망<i class="dd"></i></button></div>
</div><div class="rtitle">설계 작성<i class="dd big"></i></div></section>

<section class="rpanel p-views"><div class="rbody inset">
<button class="rb"><svg class="i16"><use href="#pview"/></svg>종단 뷰<i class="dd"></i></button>
<button class="rb"><svg class="i16"><use href="#sline"/></svg>단면 검토선</button>
<button class="rb"><svg class="i16"><use href="#xview"/></svg>횡단 뷰<i class="dd"></i></button>
</div><div class="rtitle">종단 및 횡단 뷰</div></section>

<section class="rpanel p-draw"><div class="rbody d-flex inset">
<div class="c36"><button class="rb" aria-label="선"><svg class="i16"><use href="#line"/></svg><i class="dd"></i></button><button class="rb" aria-label="점선"><svg class="i16"><use href="#ray"/></svg><i class="dd"></i></button><button class="rb" aria-label="곡선"><svg class="i16"><use href="#pie"/></svg><i class="dd"></i></button></div>
<div class="c40"><button class="rb" aria-label="호"><svg class="i16"><use href="#arc"/></svg><i class="dd"></i></button><button class="rb" aria-label="원"><svg class="i16"><use href="#circ"/></svg><i class="dd"></i></button><button class="rb" aria-label="타원"><svg class="i16"><use href="#ell"/></svg><i class="dd"></i></button></div>
<div><button class="rb" aria-label="폴리선"><svg class="i16"><use href="#poly"/></svg></button><button class="rb" aria-label="직사각형"><svg class="i16"><use href="#rect"/></svg><i class="dd"></i></button><button class="rb" aria-label="해치"><svg class="i16"><use href="#hatch"/></svg><i class="dd"></i></button></div>
</div><div class="rtitle">그리기<i class="dd big"></i></div></section>

<section class="rpanel p-modify"><div class="rbody d-flex inset">
<div class="c59"><button class="rb"><svg class="i16"><use href="#move"/></svg>이동</button><button class="rb"><svg class="i16"><use href="#copy"/></svg>복사</button><button class="rb"><svg class="i16"><use href="#stretch"/></svg>신축</button></div>
<div class="c59"><button class="rb"><svg class="i16"><use href="#rot"/></svg>회전</button><button class="rb"><svg class="i16"><use href="#mirror"/></svg>대칭</button><button class="rb"><svg class="i16"><use href="#scl"/></svg>축척</button></div>
<div class="c87"><button class="rb"><svg class="i16"><use href="#trim"/></svg><span class="wide">자르기</span><i class="dd"></i></button><button class="rb"><svg class="i16"><use href="#fillet"/></svg><span class="wide">모깎기</span><i class="dd"></i></button><button class="rb"><svg class="i16"><use href="#arr"/></svg>배열<i class="dd"></i></button></div>
<div><button class="rb" aria-label="지우기"><svg class="i16"><use href="#erase"/></svg></button><button class="rb" aria-label="분해"><svg class="i16"><use href="#box"/></svg></button><button class="rb" aria-label="간격띄우기"><svg class="i16"><use href="#offset"/></svg></button></div>
</div><div class="rtitle">수정<i class="dd big"></i></div></section>

<section class="rpanel p-layers"><div class="rbody d-flex">
<button class="bigb layerprops"><svg width="32" height="32"><use href="#layers"/></svg><span>도면층<br>특성</span></button>
<div><div class="layerbox"><svg class="i16"><use href="#bulb"/></svg><svg class="i16"><use href="#bsun"/></svg><svg class="i16"><use href="#lock"/></svg><svg width="14" height="14" class="ms-1"><path d="M0 0h14v14H0z" fill="#fff"/></svg><select aria-label="도면층" class="ms-1"><option>0</option></select><i class="dd big me-1"></i></div>
<div class="d-flex ps-1 gap-2"><button class="rb" aria-label="끄기"><svg class="i16"><use href="#l1"/></svg></button><button class="rb" aria-label="분리"><svg class="i16"><use href="#l2"/></svg></button><button class="rb" aria-label="동결"><svg class="i16"><use href="#l3"/></svg></button><button class="rb" aria-label="잠금"><svg class="i16"><use href="#l4"/></svg></button><button class="rb"><svg class="i16"><use href="#l5"/></svg>현재로 설정</button></div>
<div class="d-flex ps-1 gap-2"><button class="rb" aria-label="켜기"><svg class="i16"><use href="#m1"/></svg></button><button class="rb" aria-label="분리 해제"><svg class="i16"><use href="#m2"/></svg></button><button class="rb" aria-label="동결 해제"><svg class="i16"><use href="#m3"/></svg></button><button class="rb" aria-label="잠금 해제"><svg class="i16"><use href="#m4"/></svg></button><button class="rb"><svg class="i16"><use href="#m5"/></svg>도면층 일치</button></div></div>
</div><div class="rtitle">도면층<i class="dd big"></i></div></section>

<section class="rpanel last"><div class="rbody d-flex">
<button class="bigb pasting"><svg width="28" height="32"><use href="#paste"/></svg><span>붙여넣기</span><i class="dd m-1"></i></button>
<div><button class="rb" aria-label="잘라내기"><svg class="i16"><use href="#cut"/></svg><i class="dd"></i></button><button class="rb" aria-label="클립 복사"><svg class="i16"><use href="#cpy"/></svg><i class="dd"></i></button><button class="rb" aria-label="특성 일치"><svg class="i16"><use href="#match"/></svg></button></div>
</div><div class="rtitle">클립보드</div></section>
</header>

<nav class="filetabs d-flex" aria-label="파일 탭">
<button class="burger" aria-label="메뉴"><svg width="18" height="14"><path d="M1 2h16M1 7h16M1 12h16" stroke="#e6e8ea" stroke-width="2"/></svg></button>
<span class="slash"></span><a href="#">시작</a><span class="slash"></span><a href="#" class="longer">1.터널코리더정보추출*</a>
<a href="#" class="on">터널코리더솔리드*<svg width="9" height="9"><path d="M1 1l7 7M8 1L1 8" stroke="#b9bdc3" stroke-width="2"/></svg></a>
<button class="addtab" aria-label="새 탭"><svg width="14" height="14"><path d="M7 0v14M0 7h14" stroke="#e6e8ea" stroke-width="2"/></svg></button><span class="slash ms-1"></span>
</nav>

<main class="workspace d-flex">
<aside class="toolspace d-flex flex-column">
<div class="dockhead d-flex"><span class="grip"></span><span>도구공간</span></div>
<div class="tsbar d-flex align-items-center"><button aria-label="모형"><svg class="i16"><use href="#cube"/></svg></button>
<div class="ms-auto d-flex gap-3"><button aria-label="항목 뷰"><svg class="i16"><use href="#tg"/></svg></button><button aria-label="파노라마"><svg class="i16"><use href="#pano"/></svg></button><button aria-label="도움말"><svg class="i16" viewBox="0 0 16 16"><circle cx="8" cy="8" r="8" fill="#dcdcdc"/><path d="M5.500 6q0-2.500 2.500-2.500T10.500 6Q10.500 7.300 8 8.500V10M8 11.500v1.500" stroke="#3b4453" stroke-width="1.600" fill="none"/></svg></button></div></div>
<div class="d-flex align-items-center"><select class="views" aria-label="뷰"><option>활성 도면 뷰</option></select><i class="dd big"></i></div>
<div class="treebox"><ul>
<li><div class="trow troot"><button aria-label="접기"></button><svg class="i16"><use href="#doc"/></svg><strong>터널코리더솔리드</strong></div>
<ul class="kids linked">
<li><div class="trow"><svg class="i16"><use href="#tpt"/></svg>점</div></li>
<li><div class="trow"><svg class="i16"><use href="#tpg"/></svg>점 그룹</div></li>
<li><div class="trow"><svg class="i16"><use href="#tsurf"/></svg>지표면</div></li>
<li><div class="trow"><button class="plus" aria-label="펼치기"></button><svg class="i16"><use href="#tal"/></svg>선형</div></li>
<li><div class="trow"><svg class="i16"><use href="#tfl"/></svg>형상선</div></li>
<li><div class="trow"><svg class="i16"><use href="#tsite"/></svg>부지</div></li>
<li><div class="trow"><svg class="i16"><use href="#tcat"/></svg>유역</div></li>
<li><div class="trow"><button class="plus" aria-label="펼치기"></button><svg class="i16"><use href="#tpi"/></svg>관망</div></li>
<li><div class="trow"><svg class="i16"><use href="#tpp"/></svg>압력식 관망</div></li>
<li><div class="trow"><svg class="i16"><use href="#tbr"/></svg>교량</div></li>
<li><div class="trow"><button class="plus" aria-label="펼치기"></button><svg class="i16"><use href="#tto"/></svg>턴아웃 및 교차</div></li>
<li><div class="trow"><svg class="i16"><use href="#tco"/></svg>코리더</div></li>
<li><div class="trow"><button class="plus" aria-label="펼치기"></button><svg class="i16"><use href="#tas"/></svg>표준횡단</div></li>
<li><div class="trow"><button class="plus" aria-label="펼치기"></button><svg class="i16"><use href="#tsa"/></svg>횡단구성요소</div></li>
<li><div class="trow"><svg class="i16"><use href="#cross2"/></svg>교차로</div></li>
<li><div class="trow"><button class="plus" aria-label="펼치기"></button><svg class="i16" color="#666"><use href="#survey"/></svg>측량</div></li>
<li><div class="trow"><svg class="i16"><use href="#tvf"/></svg>뷰 프레임 그룹</div></li>
</ul></li>
<li><div class="trow troot"><button aria-label="접기"></button><svg class="i16"><use href="#db"/></svg>데이터 바로 가기 []</div>
<ul class="kids">
<li><div class="trow"><svg class="i16"><use href="#tsurfl"/></svg>지표면</div></li>
<li><div class="trow"><button class="plus" aria-label="펼치기"></button><svg class="i16"><use href="#tall"/></svg>선형</div></li>
<li><div class="trow"><svg class="i16"><use href="#tpil"/></svg>관망</div></li>
<li><div class="trow"><svg class="i16"><use href="#tppl"/></svg>압력식 관망</div></li>
<li><div class="trow"><svg class="i16"><use href="#tcol"/></svg>코리더</div></li>
<li><div class="trow"><svg class="i16"><use href="#tvfl"/></svg>뷰 프레임 그룹</div></li>
</ul></li></ul></div>
<div class="infobox"></div>
</aside>
<div class="vtabs d-flex flex-column"><button class="on">통합관리</button><button>설정</button><button>측량</button><button>도구 상자</button></div>

<aside class="palette">
<div class="dockhead d-flex"><span class="grip"></span><span class="en">TOOL PALETTES - CIVIL <span class="ko">미터법</span> ...</span></div>
<div class="groupname">미터법 기본 횡단구성요소</div>
<div>
<button class="pitem"><svg viewBox="0 0 32 30"><path d="M14 7h17L18 22H2z" fill="#8f8f8f"/><path d="M1 22h17L31 8v3L18 25H1z" fill="#e8e8e8"/><path d="M22 7L9 22" stroke="#eee" stroke-dasharray="5 2"/></svg>기본 차선</button>
<button class="pitem"><svg viewBox="0 0 32 30"><path d="M18 6l11 1q-2 9-8 11l-5 5H4z" fill="#8f8f8f"/><path d="M4 22L18 6" stroke="#c05060"/><path d="M29 6q-2 8-6 9t-8 8" stroke="#2f9a65" stroke-width="1.500" fill="none"/><path d="M4 22.500h11l5-5q7-2 9-9" stroke="#eee" stroke-width="1.500" fill="none"/><path d="M23 7L10 21" stroke="#eee" stroke-dasharray="4 2"/></svg>기본 변환 차선</button>
<button class="pitem"><svg viewBox="0 0 32 30"><path d="M0 10L22 3h10v18H0z" fill="#7fd99a"/><path d="M0 19L22 3h9l-7 17H0z" fill="#8b8b8b"/><path d="M12 19L29 3M2 19L22 5" stroke="#e4e4e4" stroke-width="1.300"/><path d="M0 20h32v3H0z" fill="#e6e6e6"/><path d="M0 23h32v4H0z" fill="#b8925f"/></svg>일반 포장 구조물</button>
<button class="pitem"><svg viewBox="0 0 32 30"><path d="M1 16L12 5l19 3-12 13z" fill="#f5f5f5"/><path d="M1 16l18 5v3H1z" fill="#dadada"/><path d="M19 21L31 8v4L19 24z" fill="#c5c5c5"/></svg>사다리꼴 쉐이프</button>
<button class="pitem"><svg viewBox="0 0 32 30"><path d="M19 6h8L12 21H5z" fill="#9a9a9a"/><path d="M5 20h7L27 6v3L12 24H5z" fill="#e8e8e8"/></svg>기본 길어깨</button>
<button class="pitem"><svg viewBox="0 0 32 30"><path d="M7 17L20 3l5-1v12L12 27H7z" fill="#bdbdbd"/><path d="M6 15l14-13h6L13 16z" fill="#f4f4f4"/><path d="M6 15l6 1v11H6z" fill="#dedede"/></svg>기본 연석</button>
<button class="pitem"><svg viewBox="0 0 32 30"><path d="M1 15L15 2h5v9l12-3v5L18 27H1z" fill="#d9d9d9"/><path d="M1 15L15 2h5L6 15z" fill="#f4f4f4"/><path d="M6 15L20 2v9L8 22z" fill="#b4b4b4"/><path d="M8 22l14-14h10L18 22z" fill="#f0f0f0"/><path d="M18 22L32 8v5L18 27z" fill="#bdbdbd"/></svg>기본 연석 및 측수로</button>
<button class="pitem"><svg viewBox="0 0 32 30"><path d="M1 17q5 6 10-1l2-2M16 9l11 6" stroke="#7fe3a0" stroke-width="2.500" fill="none"/><path d="M12 8l4 13M31 10l-5 12" stroke="#ffb98a" stroke-width="2.500"/></svg>기본 측면경사 절토 배수로</button>
<button class="pitem"><svg viewBox="0 0 32 30"><path d="M8.500 30V13M15.500 23V7M22.500 16V1" stroke="#d6d6d6" stroke-width="3"/><path d="M7 17L24 3" stroke="#efefef" stroke-width="3"/></svg>기본 난간</button>
<button class="pitem"><svg viewBox="0 0 32 30"><path d="M12 7h19L17 22H1z" fill="#f2f2f2"/><path d="M1 22h16L31 8v3L17 25H1z" fill="#cfcfcf"/><path d="M17 7L5 22M23 7L10 22M9 12h17M4 17h17" stroke="#aaa"/></svg>기본 인도</button>
<button class="pitem"><svg viewBox="0 0 32 30"><path d="M3 29L8 22l2-9L20 1l4 0 1 9 4 6-11 13z" fill="#e3e3e3"/><path d="M24 1l1 9 4 6-11 13-4-9 1-9z" fill="#b9b9b9"/></svg>기본 장벽</button>
<button class="pitem"><svg viewBox="0 0 32 30"><path d="M1 28l9-14L22 2h3l7 15-11 11z" fill="#bd9a6f"/><path d="M15 12L25 2l7 15-11 11z" fill="#9c7f56"/></svg>단순 노이즈 장벽</button>
</div>
<div class="groupname end">미터법 기본 횡단구성요소</div>
</aside>
<div class="vtabs small d-flex flex-column"><button>표준횡단 -...</button><button class="on">기본</button><button>차선</button><button>길어깨</button><button>중앙분리대</button><button>연석</button><button>사면</button><button>일반</button><button>조건부</button><button>터파기 파...</button><button>옹벽</button><button>재건</button><button>새 재건</button><button>교량</button><button>레일</button></div>

<section class="stage d-flex flex-column flex-grow-1 overflow-hidden">
<div class="drawing d-flex flex-column justify-content-between"><div>[−][평면도][2D 와이어프레임]</div>
<svg width="80" height="80" class="ms-3"><path d="M5.500 69V24M5.500 74.500H56M1.500 70.500h8v8h-8zM5.500 69v5" stroke="#e6e6e6" fill="none"/><text x="8" y="20">Y</text><text x="60" y="73">X</text></svg></div>
<div class="cmdbar d-flex">
<div class="cmdtools d-flex flex-column align-items-center gap-2 pt-1"><svg width="18" height="6"><path d="M0 1.500h18M0 4.500h18" stroke="#d8dadd" stroke-width="2" stroke-dasharray="2 1"/></svg><button aria-label="닫기"><svg width="10" height="10"><path d="M1 1l8 8M9 1L1 9" stroke="#e0e2e4" stroke-width="2"/></svg></button><button class="pt-1" aria-label="사용자화"><svg width="16" height="16"><path d="M1 15L9 7" stroke="#e0e2e4" stroke-width="3"/><path d="M8 6q0-5 5-6l-2 3 2 2 3-2q0 5-5 6z" fill="#e0e2e4"/></svg></button></div>
<div class="flex-grow-1 d-flex flex-column overflow-hidden">
<div class="cmdlog"><div><b>모형</b> <b>재생성</b> <b>중</b>.</div><div>AutoCAD <b>메뉴</b> <b>유틸리티</b> <b>가</b> <b>로드됨</b>.</div><div>AutoCAD <b>메뉴</b> <b>유틸리티</b> <b>가</b> <b>로드됨</b>.</div><div><b>명령</b>:</div><div>Autodesk DWG.  <b>이</b> <b>파일은</b> Autodesk <b>응용프로그램</b> <b>또는</b> Autodesk <b>승인</b> <b>응용프로그램에서</b> <b>마지막으로</b> <b>저장된</b> <b>신뢰할</b> <b>수</b> <b>있는</b> DWG<b>입니다</b>.</div><div><b>명령</b>:</div><div><b>명령</b>:</div></div>
<div class="cmdin d-flex align-items-center"><button class="d-flex align-items-center ms-1 me-2" aria-label="최근 명령"><svg width="17" height="13"><path d="M.5.5h16v12H.5z" fill="#f4f4f4" stroke="#666"/><path d="M0 0h17v3H0z" fill="#666"/><path d="M3 5l2 2-2 2M7 9.500h4" stroke="#444" fill="none"/></svg><i class="dd big"></i></button><input type="text" placeholder="명령 입력" aria-label="명령 입력"></div>
</div></div>
</section>
</main>
</div>
</body>
</html>
